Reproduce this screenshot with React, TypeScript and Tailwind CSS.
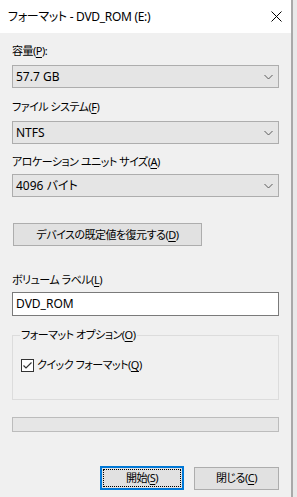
import React from "react";

const font = { fontFamily: '"Noto Sans", "Noto Sans CJK JP", sans-serif' };

function U({ children }: { children: React.ReactNode }) {
  return <span className="underline underline-offset-[2px] decoration-[1px]">{children}</span>;
}

function Chevron() {
  return (
    <svg width="9" height="6" viewBox="0 0 9 6" className="shrink-0">
      <path d="M0.5 1 L4.5 5 L8.5 1" fill="none" stroke="#5a5a5a" strokeWidth="1" />
    </svg>
  );
}

function Combo({ value, className = "" }: { value: string; className?: string }) {
  return (
    <div
      className={`h-[23px] w-[267px] border border-[#adadad] bg-[#e5e5e5] flex items-center justify-between pl-[3px] pr-[5px] text-[12px] text-black ${className}`}
    >
      <span className="leading-[16px]">{value}</span>
      <Chevron />
    </div>
  );
}

const jp = "text-[11px] tracking-[-0.5px]";

export default function App() {
  return (
    <div
      className="w-[297px] h-[497px] flex bg-[#e9e9e9] overflow-hidden [font-feature-settings:'palt']"
      style={font}
    >
      <div className="w-[293px] h-full flex flex-col bg-[#f0f0f0] border-r-2 border-[#a9a9a9]">
        {/* title bar */}
        <div className="h-[33px] bg-white flex items-center justify-between pl-[8px] pr-[9px] shrink-0">
          <span className="text-[12px] tracking-[-0.3px] leading-[16px] text-black">
            フォーマット - DVD_ROM (E:)
          </span>
          <svg width="11" height="11" viewBox="0 0 11 11">
            <path d="M0.5 0.5 L10.5 10.5 M10.5 0.5 L0.5 10.5" stroke="#000" strokeWidth="1" />
          </svg>
        </div>

        <div className="flex flex-col px-[12px] text-[12px] leading-[16px] text-black">
          <div className={`mt-[10px] h-[16px] ${jp}`}>
            容量(<U>P</U>):
          </div>
          <Combo value="57.7 GB" className="mt-[6px]" />

          <div className={`mt-[11px] h-[16px] ${jp}`}>
            ファイル システム(<U>F</U>)
          </div>
          <Combo value="NTFS" className="mt-[6px]" />

          <div className={`mt-[10px] h-[16px] ${jp}`}>
            アロケーション ユニット サイズ(<U>A</U>)
          </div>
          <Combo value="4096 バイト" className="mt-[4px]" />

          <button
            className={`mt-[26px] ml-[1px] h-[23px] w-[189px] border border-[#adadad] bg-[#e1e1e1] flex items-center justify-center text-black ${jp}`}
          >
            デバイスの既定値を復元する(<U>D</U>)
          </button>

          <div className={`mt-[26px] h-[16px] ${jp}`}>
            ボリューム ラベル(<U>L</U>)
          </div>
          <div className="mt-[4px] h-[24px] w-[267px] border border-[#7a7a7a] bg-white flex items-center pl-[3px]">
            DVD_ROM
          </div>

          <fieldset className="mt-[11px] w-[267px] h-[73px] border border-[#dcdcdc] px-[8px]">
            <legend className={`ml-[-1px] px-[1px] h-[16px] leading-[16px] ${jp}`}>
              フォーマット オプション(<U>O</U>)
            </legend>
            <div className="mt-[14px] flex items-center gap-[3px]">
              <div className="w-[13px] h-[13px] border border-[#333] bg-white flex items-center justify-center">
                <svg width="11" height="11" viewBox="0 0 11 11">
                  <path d="M1.5 5.5 L4 8 L9.5 2.5" fill="none" stroke="#333" strokeWidth="1.2" />
                </svg>
              </div>
              <span className={jp}>
                クイック フォーマット(<U>Q</U>)
              </span>
            </div>
          </fieldset>

          <div className="mt-[17px] h-[15px] w-[267px] border border-[#bcbcbc] bg-[#e6e6e6]" />

          <div className="mt-[34px] flex justify-end items-center gap-[10px]">
            <button className="w-[84px] h-[24px] border-2 border-[#0078d7] bg-[#e1e1e1] p-[1px]">
              <div className={`w-full h-full border border-dotted border-black flex items-center justify-center ${jp}`}>
                開始(<U>S</U>)
              </div>
            </button>
            <button
              className={`w-[85px] h-[23px] border border-[#adadad] bg-[#e1e1e1] flex items-center justify-center ${jp}`}
            >
              閉じる(<U>C</U>)
            </button>
          </div>
        </div>
      </div>
    </div>
  );
}
